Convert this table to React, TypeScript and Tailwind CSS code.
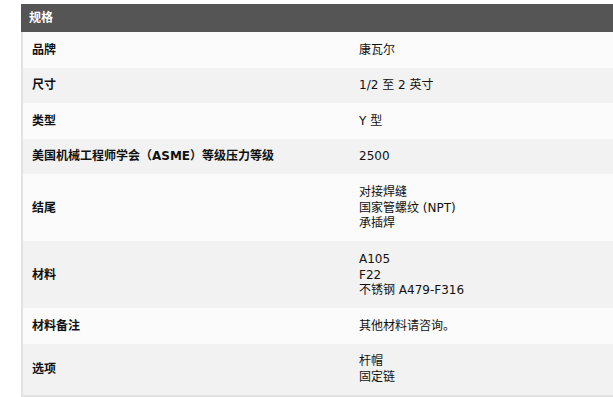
import React from "react";

const rows: { label: string; values: string[] }[] = [
  { label: "品牌", values: ["康瓦尔"] },
  { label: "尺寸", values: ["1/2 至 2 英寸"] },
  { label: "类型", values: ["Y 型"] },
  { label: "美国机械工程师学会（ASME）等级压力等级", values: ["2500"] },
  { label: "结尾", values: ["对接焊缝", "国家管螺纹 (NPT)", "承插焊"] },
  { label: "材料", values: ["A105", "F22", "不锈钢 A479-F316"] },
  { label: "材料备注", values: ["其他材料请咨询。"] },
  { label: "选项", values: ["杆帽", "固定链"] },
];

export default function App() {
  return (
    <div
      className="w-[613px] h-[397px] overflow-hidden bg-white pt-[4px] pl-[21px] text-[12px] leading-[15.75px] text-[#111]"
      style={{ fontFamily: '"DejaVu Sans", "Noto Sans CJK SC", sans-serif' }}
    >
      <div className="h-[28px] bg-[#555555] flex items-center pl-[8px] pt-[1px] font-bold text-white">
        规格
      </div>
      <div className="border-l-2 border-b-2 border-[#e2e2e2]">
        {rows.map((r, i) => (
          <div
            key={i}
            className={`grid grid-cols-[325px_1fr] ${i % 2 === 0 ? "bg-[#fbfbfb]" : "bg-[#f2f2f2]"}`}
          >
            <div className="flex items-center pl-[9px] pt-[10.875px] pb-[8.875px] font-bold">{r.label}</div>
            <div className="flex flex-col justify-center pl-[11px] pt-[10.875px] pb-[8.875px]">
              {r.values.map((v, j) => (
                <div key={j}>{v}</div>
              ))}
            </div>
          </div>
        ))}
      </div>
    </div>
  );
}
